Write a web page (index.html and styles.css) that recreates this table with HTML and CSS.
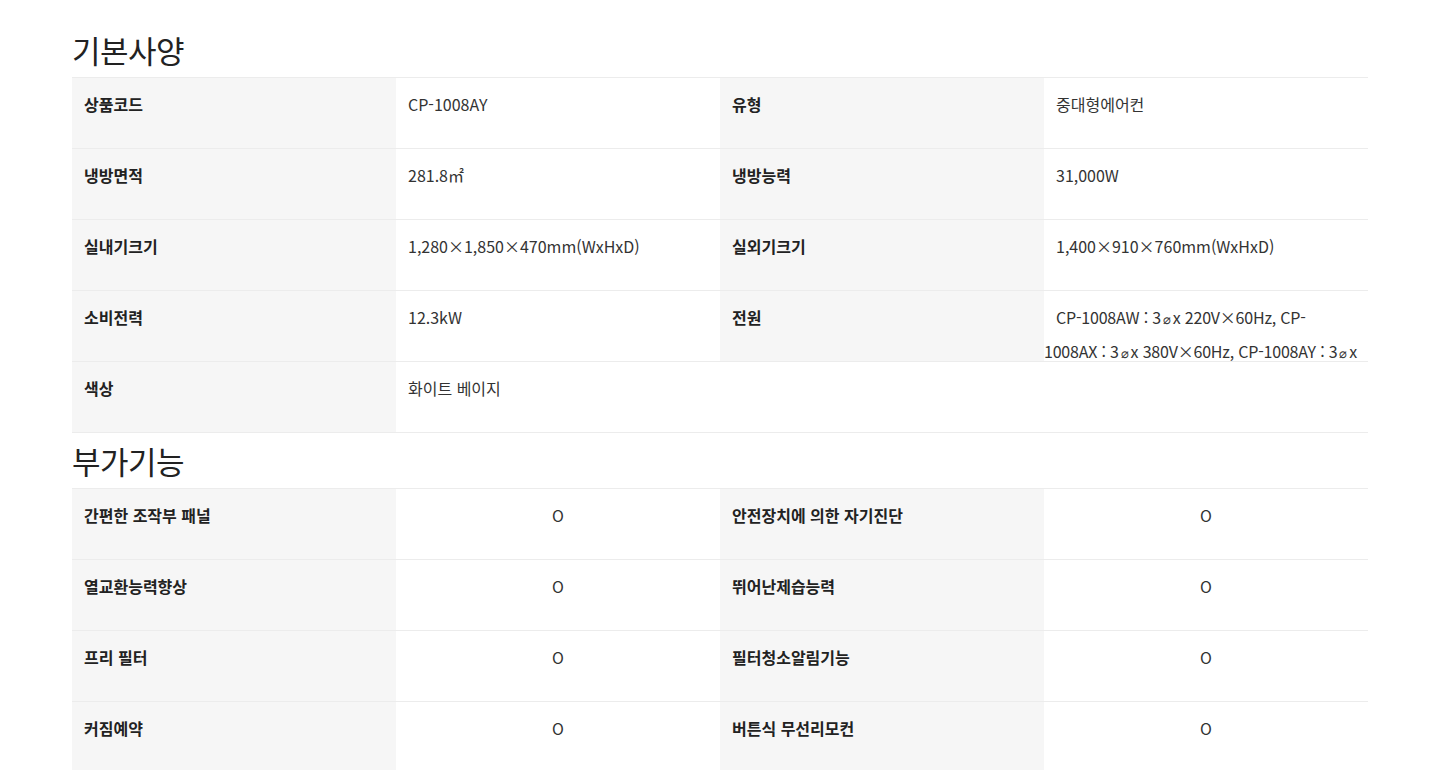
FILE: index.html
```html
<!DOCTYPE html>
<html lang="ko">
<head>
  <meta charset="UTF-8" />
  <title>제품 사양</title>
  <meta name="viewport" content="width=device-width, initial-scale=1.0" />
  <link rel="stylesheet" href="styles.css">
</head>
<body>
  <main class="spec">
    <h2 class="spec-title">기본사양</h2>
    <div class="spec-table">
      <div class="cell label">상품코드</div>
      <div class="cell value">CP-1008AY</div>
      <div class="cell label">유형</div>
      <div class="cell value">중대형에어컨</div>

      <div class="cell label">냉방면적</div>
      <div class="cell value">281.8㎡</div>
      <div class="cell label">냉방능력</div>
      <div class="cell value">31,000W</div>

      <div class="cell label">실내기크기</div>
      <div class="cell value">1,280×1,850×470mm(WxHxD)</div>
      <div class="cell label">실외기크기</div>
      <div class="cell value">1,400×910×760mm(WxHxD)</div>

      <div class="cell label">소비전력</div>
      <div class="cell value">12.3kW</div>
      <div class="cell label">전원</div>
      <div class="cell value power">
        <span class="line first">CP-1008AW : 3<span class="phi">⌀</span>x 220V×60Hz, CP-</span>
        <span class="line">1008AX : 3<span class="phi">⌀</span>x 380V×60Hz, CP-1008AY : 3<span class="phi">⌀</span>x</span>
      </div>

      <div class="cell label">색상</div>
      <div class="cell value wide">화이트 베이지</div>
    </div>

    <h2 class="spec-title">부가기능</h2>
    <div class="spec-table">
      <div class="cell label">간편한 조작부 패널</div>
      <div class="cell value mark">O</div>
      <div class="cell label">안전장치에 의한 자기진단</div>
      <div class="cell value mark">O</div>

      <div class="cell label">열교환능력향상</div>
      <div class="cell value mark">O</div>
      <div class="cell label">뛰어난제습능력</div>
      <div class="cell value mark">O</div>

      <div class="cell label">프리 필터</div>
      <div class="cell value mark">O</div>
      <div class="cell label">필터청소알림기능</div>
      <div class="cell value mark">O</div>

      <div class="cell label">커짐예약</div>
      <div class="cell value mark">O</div>
      <div class="cell label">버튼식 무선리모컨</div>
      <div class="cell value mark">O</div>
    </div>
  </main>
</body>
</html>
```

FILE: styles.css
```css
body {
  margin: 0;
  padding: 0;
  background: #fff;
  color: #222;
  font-family: "Noto Sans CJK KR", "Noto Sans", sans-serif;
}

.spec {
  width: 1296px;
  margin: 0 auto;
  padding-top: 22px;
}

.spec-title {
  margin: 0;
  height: 55px;
  line-height: 55px;
  font-size: 31px;
  font-weight: 400;
  color: #222;
  letter-spacing: -0.5px;
}

.spec-table {
  display: grid;
  grid-template-columns: repeat(4, 1fr);
  border-top: 1px solid #ececec;
}

.cell {
  box-sizing: content-box;
  padding: 10px 12px 0;
  height: 60px;
  line-height: 32px;
  font-size: 16px;
  border-bottom: 1px solid #ececec;
  overflow: hidden;
}

.label {
  background: #f6f6f6;
  font-weight: 700;
  color: #222;
}

.value {
  color: #333;
}

.wide {
  grid-column: span 3;
}

.mark {
  text-align: center;
}

.power {
  padding-left: 0;
  padding-right: 0;
}

.power .line {
  display: block;
  white-space: nowrap;
  letter-spacing: -0.2px;
}

.power .first {
  padding-left: 12px;
}

.phi {
  font-size: 13px;
  margin: 0 2px;
}
```
